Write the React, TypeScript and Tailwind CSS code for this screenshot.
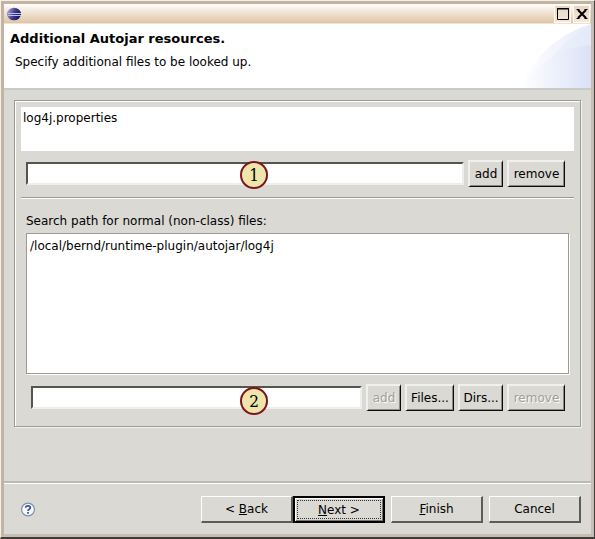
import type { ReactNode } from "react";

const RAISED =
  "h-[27px] shrink-0 border-t-2 border-l-2 border-b border-r border-t-[#f0f0ee] border-l-[#f0f0ee] border-b-[#0c0c0c] border-r-[#0c0c0c] bg-[#dad9d4] text-center leading-[22px] whitespace-nowrap shadow-[inset_-1px_-1px_0_#8b8a85]";

function SmallButton({ width, disabled, children }: { width: string; disabled?: boolean; children: ReactNode }) {
  return (
    <button
      type="button"
      disabled={disabled}
      className={`${RAISED} ${width} disabled:text-[#a09f9a] disabled:[text-shadow:1px_1px_0_#ffffff]`}
    >
      {children}
    </button>
  );
}

function WizardButton({ children }: { children: ReactNode }) {
  return (
    <button
      type="button"
      className="h-[27px] w-[92px] border-t border-l border-r-2 border-b-2 border-t-white border-l-white border-r-[#5c5b57] border-b-[#5c5b57] bg-[#dad9d4] leading-[24px]"
    >
      {children}
    </button>
  );
}

function PathInput({ label }: { label: string }) {
  return (
    <input
      type="text"
      aria-label={label}
      className="h-[23px] min-w-0 flex-1 border-t-2 border-r-2 border-b-2 border-l-2 border-t-[#555451] border-l-[#555451] border-r-[#eeeeec] border-b-[#eeeeec] bg-white px-1 outline-none"
    />
  );
}

function Marker({ children }: { children: ReactNode }) {
  return (
    <span className="flex size-7 items-center justify-center rounded-full border-2 border-[#7d1518] bg-[#ede5ab] font-['DejaVu_Serif_Condensed','DejaVu_Serif',serif] text-[17px] leading-6 text-black">
      {children}
    </span>
  );
}

function EclipseLogo() {
  return (
    <svg width="14" height="14" viewBox="0 0 14 14" aria-hidden="true">
      <defs>
        <linearGradient id="globe" x1="0" x2="1" y1="0" y2="0.4">
          <stop offset="0" stopColor="#f0b4c8" />
          <stop offset="0.25" stopColor="#8d82ba" />
          <stop offset="0.6" stopColor="#3f3a8c" />
          <stop offset="1" stopColor="#191960" />
        </linearGradient>
      </defs>
      <ellipse cx="7" cy="7" rx="7" ry="6.300" fill="url(#globe)" />
      <path d="M1 6.500h13M1 8.500h13" stroke="#b9c4ee" strokeWidth="1" />
    </svg>
  );
}

export default function App() {
  return (
    <div className="flex min-h-screen flex-col border-t border-l border-r border-b-2 border-t-[#f7f1dc] border-l-[#f7f1dc] border-r-[#3f3b38] border-b-[#3f3b38] bg-[#dad9d4] font-['DejaVu_Sans',sans-serif] text-[12px] leading-4 text-black">
      <div className="flex flex-1 flex-col border-3 border-[#c0b4a8] border-r-[#c7bdb5] border-b-[#c7bdb5]">
        <header>
          <div className="flex h-5 items-center justify-between border-b border-[#efe2d0] bg-linear-to-b from-[#fffdfb] to-[#dfc5a6] pr-px pl-[3px]">
            <EclipseLogo />
            <div className="flex gap-[2px]">
              <button type="button" aria-label="Maximize" className="flex h-[18px] w-[17px] items-center justify-center border border-[#fffaf2] bg-linear-to-b from-[#ead6c0] to-[#f3e8dc]">
                <svg width="12" height="12" viewBox="0 0 12 12">
                  <path d="M.5.5h11v11H.5zM0 1h12" fill="none" stroke="#000" />
                </svg>
              </button>
              <button type="button" aria-label="Close" className="flex h-[18px] w-[17px] items-center justify-center border border-[#fffaf2] bg-linear-to-b from-[#ead6c0] to-[#f3e8dc]">
                <svg width="12" height="12" viewBox="0 0 12 12">
                  <path d="M2 2l8 8M10 2l-8 8" fill="none" stroke="#000" strokeWidth="2" />
                  <path d="M.5 1.500h3M8.500 1.500h3M.5 10.500h3M8.500 10.500h3" stroke="#000" />
                </svg>
              </button>
            </div>
          </div>
          <div className="flex h-[66px] justify-between border-b-2 border-[#c9c9c8] bg-white">
            <div className="pt-[7px] pl-[6px]">
              <h1 className="text-[13px] font-bold">Additional Autojar resources.</h1>
              <p className="mt-[7px] pl-[5px]">Specify additional files to be looked up.</p>
            </div>
            <svg width="72" height="64" viewBox="0 0 72 64" aria-hidden="true">
              <defs>
                <linearGradient id="arcBack">
                  <stop offset="0" stopColor="#fff" />
                  <stop offset="1" stopColor="#e6ebf9" />
                </linearGradient>
                <linearGradient id="arcFront">
                  <stop offset="0" stopColor="#fff" />
                  <stop offset="1" stopColor="#dbe2f7" />
                </linearGradient>
              </defs>
              <path d="M2 64C14 32 40 10 72 0V64Z" fill="url(#arcBack)" />
              <path d="M2 64C18 40 42 22 72 21V64Z" fill="url(#arcFront)" />
              <path d="M32 34Q48 14 72 1V21Q50 23 32 34Z" fill="#e0e7fa" opacity=".35" />
            </svg>
          </div>
        </header>

        <main className="flex-1 px-[10px] pt-[10px]">
          <section className="border border-[#9c9a94] p-px shadow-[inset_1px_1px_0_#fff,1px_1px_0_#f3f3f1]">
            <div className="px-[5px] pt-[5px] pb-[14px]">
              <select
                size={3}
                aria-label="Additional files"
                className="block h-11 w-full appearance-none overflow-hidden bg-white px-[2px] pt-1 outline-none"
              >
                <option>log4j.properties</option>
              </select>

              <div className="relative mt-[9px] flex items-center gap-1 pr-[9px] pl-[5px]">
                <PathInput label="File to add" />
                <SmallButton width="w-[35px]">add</SmallButton>
                <SmallButton width="w-[58px]">remove</SmallButton>
                <div className="absolute top-px left-[219px]">
                  <Marker>1</Marker>
                </div>
              </div>

              <hr className="mt-[10px] h-[2px] border-t border-b border-t-[#9c9a94] border-b-white" />

              <div className="px-[5px]">
                <label htmlFor="paths" className="mt-[14px] mb-1 block">
                  Search path for normal (non-class) files:
                </label>
                <select
                  id="paths"
                  size={7}
                  className="block h-[141px] w-full appearance-none overflow-hidden border border-[#9c9a94] bg-white px-[3px] pt-[5px] shadow-[1px_1px_0_#fff] outline-none"
                >
                  <option>/local/bernd/runtime-plugin/autojar/log4j</option>
                </select>
              </div>

              <div className="relative mt-[10px] flex items-center gap-1 pr-[9px] pl-[10px]">
                <PathInput label="Path to add" />
                <SmallButton width="w-[35px]" disabled>add</SmallButton>
                <SmallButton width="w-[49px]">Files...</SmallButton>
                <SmallButton width="w-[45px]">Dirs...</SmallButton>
                <SmallButton width="w-[58px]" disabled>remove</SmallButton>
                <div className="absolute top-[3px] left-[219px]">
                  <Marker>2</Marker>
                </div>
              </div>
            </div>
          </section>
        </main>

        <footer className="flex items-center border-t-2 border-[#bcbab5] pt-[13px] pr-[10px] pb-[11px] pl-4 shadow-[inset_0_1px_0_#fff]">
          <button type="button" aria-label="Help" className="size-4">
            <svg width="16" height="16" viewBox="0 0 16 16">
              <circle cx="8" cy="7.500" r="6.400" fill="#f6f8fc" stroke="#7c8fb2" strokeWidth="1.200" />
              <path d="M5.700 5.800C5.700 3.100 10.300 3.200 10.300 5.700C10.300 7.300 8 7.200 8 9M8 10v1.700" fill="none" stroke="#40588c" strokeWidth="1.800" />
            </svg>
          </button>
          <div className="ml-auto flex">
            <WizardButton>&lt; <u>B</u>ack</WizardButton>
            <button type="button" className="h-[27px] w-[92px] border-2 border-black bg-[#dad9d4] p-[2px] shadow-[inset_1px_1px_0_#fff,inset_-1px_-1px_0_#777672]">
              <span className="block h-[19px] border border-dotted border-[#33322f] leading-[18px]"><u>N</u>ext &gt;</span>
            </button>
          </div>
          <div className="ml-[6px] flex gap-[6px]">
            <WizardButton><u>F</u>inish</WizardButton>
            <WizardButton>Cancel</WizardButton>
          </div>
        </footer>
      </div>
    </div>
  );
}
